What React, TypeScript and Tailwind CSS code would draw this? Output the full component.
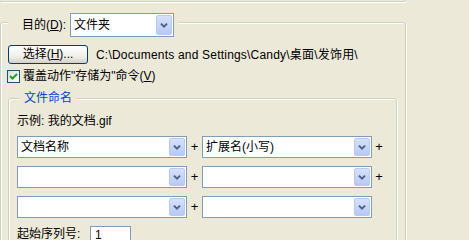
import React from 'react';

const Chevron = () => (
  <svg width="16" height="20" viewBox="0 0 16 20" className="block">
    <path d="M4.5 8.5 L8 12 L11.5 8.5" stroke="#4D6185" strokeWidth="2.2" fill="none" />
  </svg>
);

const Combo = ({ value, className }: { value?: string; className: string }) => (
  <div className={`flex items-stretch border border-[#7F9DB9] bg-white p-px ${className}`}>
    <span className="flex flex-1 items-center pl-[2px] whitespace-nowrap">{value}</span>
    <span className="flex w-[16px] items-center justify-center rounded-[2px] border border-[#B9C9EF] bg-[linear-gradient(#D6E1FB,#B7C9F5)]">
      <Chevron />
    </span>
  </div>
);

const Plus = ({ className }: { className: string }) => (
  <span className={`text-center text-[13px] ${className}`}>+</span>
);

const NameRow = ({ first, second, trailing }: { first?: string; second?: string; trailing: boolean }) => (
  <div className="flex items-center">
    <Combo value={first} className="h-[22px] w-[170px]" />
    <Plus className="w-[15px]" />
    <Combo value={second} className="h-[22px] w-[170px]" />
    {trailing && <Plus className="w-[14px]" />}
  </div>
);

export default function App() {
  return (
    <div className="h-[240px] w-[469px] overflow-hidden bg-[#ECE9D8] font-['Tahoma','Liberation_Sans','Noto_Sans_CJK_SC',sans-serif] text-[12px] leading-[14px] text-black">
      {/* bottom edge of the box above */}
      <div className="h-[2px] w-[406px] rounded-br-[3px] border-b border-r border-[#D0D0BF] shadow-[1px_1px_0_#fff]" />

      <div className="mt-[20px] w-[406px] rounded-[3px] border border-[#D0D0BF] pb-[40px] shadow-[inset_1px_1px_0_#fff,1px_1px_0_#fff]">
        {/* legend: destination */}
        <div className="-mt-[10px] ml-[7px] flex w-fit items-center gap-[4px] bg-[#ECE9D8] pl-[14px] pr-[4px]">
          <span>
            目的(<span className="underline">D</span>):
          </span>
          <Combo value="文件夹" className="h-[24px] w-[104px]" />
        </div>

        <div className="mt-[8px] flex items-center gap-[8px] pl-[7px]">
          <button className="h-[19px] w-[80px] rounded-[3px] border border-[#003C74] bg-[linear-gradient(#FFFFFF,#F0F0EA_60%,#D6D0C5)] text-center leading-[17px]">
            选择(<span className="underline">H</span>)...
          </button>
          <span className="whitespace-nowrap tracking-[0.2px]">C:\Documents and Settings\Candy\桌面\发饰用\</span>
        </div>

        <div className="mt-[5px] flex items-center gap-[3px] pl-[6px]">
          <span className="flex h-[13px] w-[13px] items-center justify-center border border-[#1C5180] bg-[linear-gradient(135deg,#DCDCD7,#FFFFFF)]">
            <svg width="9" height="9" viewBox="0 0 9 9">
              <path d="M1 4 L3.5 6.5 L8 2" stroke="#21A121" strokeWidth="2" fill="none" />
            </svg>
          </span>
          <span>
            覆盖动作"存储为"命令(<span className="underline">V</span>)
          </span>
        </div>

        {/* file naming group */}
        <div className="ml-[7px] mt-[15px] w-[389px] rounded-[3px] border border-[#D0D0BF] pb-[30px] shadow-[inset_1px_1px_0_#fff,1px_1px_0_#fff]">
          <div className="-mt-[8px] ml-[10px] w-fit bg-[#ECE9D8] px-[5px] text-[#0046D5]">文件命名</div>

          <div className="pl-[8px]">
            <div className="mt-[9px]">示例: 我的文档.gif</div>

            <div className="mt-[8px] flex flex-col gap-[8px]">
              <NameRow first="文档名称" second="扩展名(小写)" trailing />
              <NameRow trailing />
              <NameRow trailing={false} />
            </div>

            <div className="mt-[8px] flex items-start">
              <span className="w-[73px] pt-[1px]">起始序列号:</span>
              <div className="h-[20px] w-[41px] border border-[#7F9DB9] bg-white pl-[4px] pt-[1px]">1</div>
            </div>
          </div>
        </div>
      </div>
    </div>
  );
}
